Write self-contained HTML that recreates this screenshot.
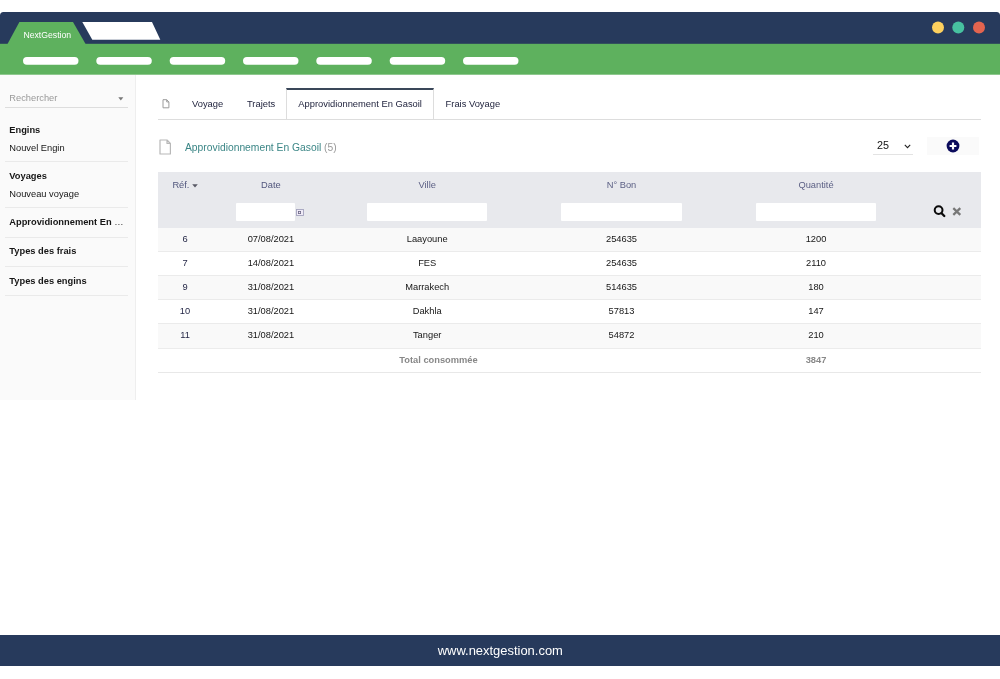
<!DOCTYPE html>
<html lang="fr">
<head>
<meta charset="utf-8">
<title>NextGestion</title>
<style>
*{box-sizing:border-box;margin:0;padding:0}
html,body{width:1000px;height:679px;background:#fff;overflow:hidden}
body{position:relative;font-family:"Liberation Sans",sans-serif;font-size:9.3px;color:#161616;will-change:transform}
.abs{position:absolute}
.t{position:absolute;white-space:nowrap;line-height:12px;height:12px}
.b{font-weight:bold}
.c{text-align:center}
#chrome{position:absolute;left:0;top:0;width:1000px;height:76px;display:block}
#side{position:absolute;left:0;top:74.6px;width:136px;height:325.7px;background:#fafafa;border-right:1px solid #eee}
.sep{position:absolute;left:5.4px;width:122.2px;height:1px;background:#eaeaea}
.hl{position:absolute;height:1px;background:#ddd}
#foot{position:absolute;left:0;top:635px;width:1000px;height:30.6px;background:#273a5c;color:#fff;font-size:12.95px;text-align:center;line-height:31px;padding-left:0.6px}
.row{position:absolute;left:158px;width:823px;height:24px;border-top:1px solid #ebebeb}
.odd{background:#f9f9f9}
.inp{position:absolute;top:202.7px;height:18.5px;background:#fff;border-radius:1px}
</style>
</head>
<body>
<!-- window chrome -->
<svg id="chrome" viewBox="0 0 1000 76">
  <path d="M0 44V15.5a3.5 3.5 0 0 1 3.5-3.5H996.5a3.5 3.5 0 0 1 3.5 3.5V44Z" fill="#273a5c"/>
  <rect x="0" y="43.8" width="1000" height="30.9" fill="#5eb15e"/>
  <polygon points="19.4,22 73,22 85.6,44 7.5,44" fill="#5eb15e"/>
  <polygon points="82.3,22 152,22 160.3,39.8 92.3,39.8" fill="#fff"/>
  <g fill="#fff">
    <rect x="23" y="56.9" width="55.5" height="7.8" rx="3.9"/>
    <rect x="96.3" y="56.9" width="55.5" height="7.8" rx="3.9"/>
    <rect x="169.7" y="56.9" width="55.5" height="7.8" rx="3.9"/>
    <rect x="243" y="56.9" width="55.5" height="7.8" rx="3.9"/>
    <rect x="316.3" y="56.9" width="55.5" height="7.8" rx="3.9"/>
    <rect x="389.7" y="56.9" width="55.5" height="7.8" rx="3.9"/>
    <rect x="463" y="56.9" width="55.5" height="7.8" rx="3.9"/>
  </g>
  <circle cx="938" cy="27.5" r="6" fill="#fdd05e"/>
  <circle cx="958.3" cy="27.5" r="6" fill="#47c1a0"/>
  <circle cx="979" cy="27.5" r="6" fill="#e4644f"/>
</svg>
<div class="t" style="left:23.4px;top:28.5px;font-size:8.7px;color:#fff">NextGestion</div>

<!-- sidebar -->
<div id="side"></div>
<div class="t" style="left:9.3px;top:91.8px;color:#999">Rechercher</div>
<svg class="abs" style="left:117.8px;top:96.9px" width="6" height="4" viewBox="0 0 6 4"><path d="M0.3 0.3H5.3L2.8 3.4Z" fill="#777"/></svg>
<div class="sep" style="top:106.8px;background:#ddd;left:5.4px;width:122.2px"></div>
<div class="t b" style="left:9.3px;top:123.8px">Engins</div>
<div class="t" style="left:9.3px;top:141.8px">Nouvel Engin</div>
<div class="sep" style="top:161.2px"></div>
<div class="t b" style="left:9.3px;top:169.8px">Voyages</div>
<div class="t" style="left:9.3px;top:188.2px">Nouveau voyage</div>
<div class="sep" style="top:207px"></div>
<div class="t b" style="left:9.3px;top:215.9px">Approvidionnement En <span style="font-weight:normal;color:#333">…</span></div>
<div class="sep" style="top:236.9px"></div>
<div class="t b" style="left:9.3px;top:245.3px">Types des frais</div>
<div class="sep" style="top:265.6px"></div>
<div class="t b" style="left:9.3px;top:274.8px">Types des engins</div>
<div class="sep" style="top:294.6px"></div>

<!-- tabs -->
<div class="hl" style="left:158px;top:119px;width:823px"></div>
<div class="abs" style="left:286px;top:88.2px;width:148px;height:31px;background:#fff;border:1px solid #ddd;border-top:2px solid #3a4759;border-bottom:0"></div>
<svg class="abs" style="left:161.5px;top:99px" width="9" height="10" viewBox="0 0 9 10"><path d="M1 0.7H4.7L6.9 2.9V8.8H1Z M4.7 0.7V2.9H6.9" fill="#fff" stroke="#9c9c9c" stroke-width="1"/></svg>
<div class="t" style="left:192px;top:98.4px;font-size:9.35px;color:#22253f">Voyage</div>
<div class="t" style="left:247px;top:98.4px;font-size:9.35px;color:#22253f">Trajets</div>
<div class="t" style="left:298.3px;top:98.4px;font-size:9.35px;color:#22253f">Approvidionnement En Gasoil</div>
<div class="t" style="left:445.6px;top:98.4px;font-size:9.35px;color:#22253f">Frais Voyage</div>

<!-- title row -->
<svg class="abs" style="left:158.5px;top:139px" width="13" height="16" viewBox="0 0 13 16"><path d="M1 1H8L11.4 4.4V15H1Z M8 1V4.4H11.4" fill="#fff" stroke="#b8b8b8" stroke-width="1.2" stroke-linejoin="round"/></svg>
<div class="t" style="left:185px;top:141.6px;font-size:10.3px;color:#3b8686">Approvidionnement En Gasoil <span style="color:#999">(5)</span></div>

<div class="t" style="left:877px;top:139.2px;font-size:10.8px;color:#111">25</div>
<svg class="abs" style="left:903.9px;top:143.5px" width="7" height="5" viewBox="0 0 7 5"><path d="M0.8 0.9L3.5 3.6L6.2 0.9" fill="none" stroke="#222" stroke-width="1.1"/></svg>
<div class="hl" style="left:873.3px;top:154px;width:40px;background:#e3e3e3"></div>
<div class="abs" style="left:927.3px;top:137px;width:51.8px;height:17.8px;background:#fafafa"></div>
<svg class="abs" style="left:945.8px;top:139.4px" width="14" height="14" viewBox="0 0 14 14"><circle cx="7" cy="7" r="6.4" fill="#0c0c5c"/><path d="M7 3.6V10.4M3.6 7H10.4" stroke="#fff" stroke-width="2.2"/></svg>

<!-- table header -->
<div class="abs" style="left:158px;top:172.4px;width:823px;height:55.2px;background:#e8e9ed"></div>
<div class="t" style="left:172.4px;top:178.6px;color:#50557c">Réf.</div>
<svg class="abs" style="left:191.5px;top:183.5px" width="6" height="4" viewBox="0 0 6 4"><path d="M0.2 0.3H5.8L3 3.5Z" fill="#5a5a66"/></svg>
<div class="t c" style="left:212.4px;width:117px;top:178.6px;color:#50557c">Date</div>
<div class="t c" style="left:329.7px;width:195px;top:178.6px;color:#5b5f84">Ville</div>
<div class="t c" style="left:524px;width:195px;top:178.6px;color:#5b5f84">N° Bon</div>
<div class="t c" style="left:719px;width:194px;top:178.6px;color:#5b5f84">Quantité</div>
<div class="inp" style="left:236px;width:58.6px"></div>
<svg class="abs" style="left:296px;top:209.2px" width="8" height="7" viewBox="0 0 8 7"><rect x="0.5" y="0.5" width="7" height="6" fill="#efeaf6" stroke="#a4a4be" stroke-width="0.9"/><rect x="2.4" y="2.4" width="2.2" height="2.2" fill="none" stroke="#6d6888" stroke-width="0.8"/></svg>
<div class="inp" style="left:366.6px;width:120.8px"></div>
<div class="inp" style="left:561.4px;width:120.4px"></div>
<div class="inp" style="left:755.8px;width:120.6px"></div>
<svg class="abs" style="left:933px;top:205px" width="13" height="13" viewBox="0 0 13 13"><circle cx="5.6" cy="5.1" r="3.9" fill="none" stroke="#0a0a0a" stroke-width="2"/><path d="M8.6 8.2L11.3 11" stroke="#0a0a0a" stroke-width="2.3" stroke-linecap="round"/></svg>
<svg class="abs" style="left:952px;top:207px" width="10" height="9" viewBox="0 0 10 9"><path d="M1.3 1.1L8.3 7.9M8.3 1.1L1.3 7.9" stroke="#777" stroke-width="2.2"/></svg>

<!-- rows -->
<div class="row odd" style="top:227.6px;border-top:0"></div>
<div class="row" style="top:251.4px"></div>
<div class="row odd" style="top:275.3px"></div>
<div class="row" style="top:299.3px"></div>
<div class="row odd" style="top:323.3px;height:25px"></div>
<div class="hl" style="left:158px;top:347.6px;width:823px;background:#ececec"></div>
<div class="hl" style="left:158px;top:371.7px;width:823px;background:#e8e8e8"></div>

<div class="t c" style="left:158px;width:54px;top:232.6px;color:#1f2242">6</div>
<div class="t c" style="left:212.4px;width:117px;top:232.6px">07/08/2021</div>
<div class="t c" style="left:329.7px;width:195px;top:232.6px">Laayoune</div>
<div class="t c" style="left:524px;width:195px;top:232.6px">254635</div>
<div class="t c" style="left:719px;width:194px;top:232.6px">1200</div>

<div class="t c" style="left:158px;width:54px;top:256.8px;color:#1f2242">7</div>
<div class="t c" style="left:212.4px;width:117px;top:256.8px">14/08/2021</div>
<div class="t c" style="left:329.7px;width:195px;top:256.8px">FES</div>
<div class="t c" style="left:524px;width:195px;top:256.8px">254635</div>
<div class="t c" style="left:719px;width:194px;top:256.8px">2110</div>

<div class="t c" style="left:158px;width:54px;top:281.4px;color:#1f2242">9</div>
<div class="t c" style="left:212.4px;width:117px;top:281.4px">31/08/2021</div>
<div class="t c" style="left:329.7px;width:195px;top:281.4px">Marrakech</div>
<div class="t c" style="left:524px;width:195px;top:281.4px">514635</div>
<div class="t c" style="left:719px;width:194px;top:281.4px">180</div>

<div class="t c" style="left:158px;width:54px;top:305.4px;color:#1f2242">10</div>
<div class="t c" style="left:212.4px;width:117px;top:305.4px">31/08/2021</div>
<div class="t c" style="left:329.7px;width:195px;top:305.4px">Dakhla</div>
<div class="t c" style="left:524px;width:195px;top:305.4px">57813</div>
<div class="t c" style="left:719px;width:194px;top:305.4px">147</div>

<div class="t c" style="left:158px;width:54px;top:329.4px;color:#1f2242">11</div>
<div class="t c" style="left:212.4px;width:117px;top:329.4px">31/08/2021</div>
<div class="t c" style="left:329.7px;width:195px;top:329.4px">Tanger</div>
<div class="t c" style="left:524px;width:195px;top:329.4px">54872</div>
<div class="t c" style="left:719px;width:194px;top:329.4px">210</div>

<div class="t c b" style="left:158px;width:561px;top:353.6px;color:#888">Total consommée</div>
<div class="t c b" style="left:719px;width:194px;top:353.6px;color:#888">3847</div>

<!-- footer -->
<div id="foot">www.nextgestion.com</div>
</body>
</html>
